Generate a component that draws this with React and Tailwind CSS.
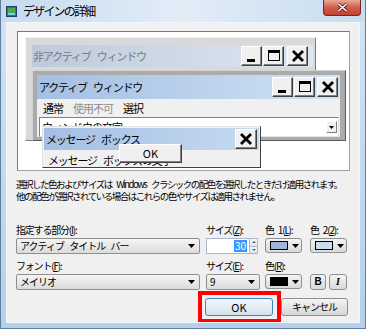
const jp = "font-['Noto_Sans_CJK_JP',sans-serif]";

function Tri() {
  return (
    <svg width="7" height="4" viewBox="0 0 7 4" className="shrink-0">
      <path d="M0 0h7L3.5 4z" fill="#000" />
    </svg>
  );
}

function CaptionBtn({ kind, className = '' }) {
  return (
    <div className={`w-[21px] h-[20px] bg-[#f0f0f0] border border-t-white border-l-white border-b-[#404040] border-r-[#404040] shadow-[inset_-1px_-1px_0_#808080] flex items-center justify-center ${className}`}>
      <svg width="14" height="14" viewBox="0 0 14 14">
        {kind === 'min' && <rect x="2" y="10" width="8" height="3" fill="#000" />}
        {kind === 'max' && (
          <>
            <rect x="1.5" y="1.5" width="11" height="10" fill="none" stroke="#000" />
            <rect x="1" y="1" width="12" height="3" fill="#000" />
          </>
        )}
        {kind === 'close' && <path d="M2 2l10 10M12 2L2 12" stroke="#000" strokeWidth="2.8" />}
      </svg>
    </div>
  );
}

function Combo({ children, className = '' }) {
  return (
    <div className={`h-[16px] rounded-[2px] border border-[#8e8f8f] bg-gradient-to-b from-[#f4f4f4] to-[#dcdcdc] flex items-center justify-between pl-[3px] pr-[4px] ${className}`}>
      <span className="text-[10px] leading-none tracking-[-1px] [word-spacing:4px] whitespace-nowrap">{children}</span>
      <Tri />
    </div>
  );
}

function ColorBtn({ swatch }) {
  return (
    <div className="w-[37px] h-[15px] rounded-[3px] border border-[#8e8f8f] bg-gradient-to-b from-[#f4f4f4] to-[#d9d9d9] flex items-center pl-[4px] gap-[4px]">
      <div className={`w-[18px] h-[9px] border border-black ${swatch}`} />
      <Tri />
    </div>
  );
}

function Label({ children }) {
  return <div className="h-[14px] text-[10px] leading-[12px] tracking-[-1.2px] [word-spacing:3px] whitespace-nowrap">{children}</div>;
}

export default function App() {
  return (
    <div className={`w-[366px] h-[329px] overflow-hidden ${jp} text-black bg-gradient-to-b from-[#d3e3f3] to-[#b6d0ea] border-x border-b border-[#607f9f] flex flex-col`}>
      {/* title bar */}
      <div className="h-[22px] shrink-0 flex items-start justify-between pl-[5px] pr-[4px] bg-gradient-to-r from-[#c6dbef] via-[#e2edf7] to-[#c8dcf0]">
        <div className="flex items-center gap-[6px] mt-[5px]">
          <svg width="11" height="11" viewBox="0 0 11 11">
            <rect x="0.5" y="0.5" width="10" height="10" fill="#2f6fb8" stroke="#1d3f6b" />
            <rect x="2" y="2" width="7" height="5" fill="#44b04a" />
            <rect x="2" y="7" width="7" height="2" fill="#7fc6ff" />
          </svg>
          <span className="text-[12px] leading-none tracking-[-1.8px]">デザインの詳細</span>
        </div>
        <div className="w-[38px] h-[16px] rounded-b-[4px] border border-t-0 border-[#6e2b25] bg-gradient-to-b from-[#e9a795] via-[#d25b4c] to-[#c1412f] flex items-center justify-center">
          <svg width="11" height="9" viewBox="0 0 11 9">
            <path d="M1.5 1l8 7M9.5 1l-8 7" stroke="#5a1d18" strokeWidth="3.2" />
            <path d="M1.5 1l8 7M9.5 1l-8 7" stroke="#fff" strokeWidth="1.6" />
          </svg>
        </div>
      </div>

      {/* client */}
      <div className="mx-[5px] h-[301px] shrink-0 border border-[#f2f7fc] bg-[#f0f0f0] flex flex-col overflow-hidden">
        {/* preview */}
        <div className="relative ml-[10px] mt-[8px] w-[333px] h-[140px] shrink-0 bg-white border border-[#a0a0a0] border-t-[#7a7a7a] border-l-[#7a7a7a] overflow-hidden">
          {/* inactive window */}
          <div className="absolute left-[7px] top-[5px] w-[291px] h-[104px] bg-[#d9d9d9] border border-t-[#f4f4f4] border-l-[#f4f4f4] border-b-[#7a7a7a] border-r-[#7a7a7a] pt-[7px] pl-[6px] pr-[2px]">
            <div className="h-[22px] bg-gradient-to-r from-[#bccadb] to-[#dfe8f1] flex items-center justify-between">
              <span className="pl-[1px] text-[11px] leading-none tracking-[-1.2px] [word-spacing:5px] text-[#7a7a7a] whitespace-nowrap">非アクティブ ウィンドウ</span>
              <div className="flex items-center mr-[5px]">
                <CaptionBtn kind="min" />
                <CaptionBtn kind="max" className="ml-[1px]" />
                <CaptionBtn kind="close" className="ml-[3px]" />
              </div>
            </div>
          </div>

          {/* active window */}
          <div className="absolute left-[14px] top-[38px] w-[314px] h-[71px] bg-[#ababab] border border-t-[#d4d4d4] border-l-[#d4d4d4] border-b-[#5a5a5a] border-r-[#5a5a5a] pt-[4px] pl-[4px] pr-[5px] overflow-hidden">
            <div className="h-[24px] bg-gradient-to-r from-[#a4bfe3] to-[#d0e2f5] flex items-center justify-between">
              <span className="pl-[2px] text-[11px] leading-none tracking-[-1.2px] [word-spacing:5px] whitespace-nowrap">アクティブ ウィンドウ</span>
              <div className="flex items-center mr-[2px]">
                <CaptionBtn kind="min" />
                <CaptionBtn kind="max" className="ml-[1px]" />
                <CaptionBtn kind="close" className="ml-[2px]" />
              </div>
            </div>
            <div className="bg-[#f0f0f0] pl-[2px] pr-[1px]">
              <div className="h-[18px] flex items-center pl-[4px] text-[11px] leading-none tracking-[-1px] whitespace-nowrap">
                <span className="w-[30px]">通常</span>
                <span className="w-[50px] text-[#8d8d8d]">使用不可</span>
                <span>選択</span>
              </div>
              <div className="h-[20px] bg-white border border-t-[#808080] border-l-[#808080] border-b-[#e4e4e4] border-r-[#e4e4e4] flex items-center justify-between pl-[2px] pr-[1px]">
                <span className="text-[11px] leading-none tracking-[-1px]">ウィンドウの文字</span>
                <div className="w-[11px] h-[12px] bg-[#f0f0f0] border border-t-white border-l-white border-b-[#808080] border-r-[#808080] flex items-center justify-center">
                  <svg width="5" height="3" viewBox="0 0 5 3"><path d="M0 0h5L2.5 3z" fill="#000" /></svg>
                </div>
              </div>
            </div>
          </div>

          {/* message box */}
          <div className="absolute left-[24px] top-[94px] w-[219px] h-[42px] bg-[#f0f0f0] border border-t-[#e3e3e3] border-l-[#e3e3e3] border-b-[#404040] border-r-[#404040] pt-[1px] px-[1px] overflow-hidden">
            <div className="h-[22px] bg-gradient-to-r from-[#a4bfe3] to-[#c6daf1] flex items-center justify-between">
              <span className="pl-[2px] text-[11px] leading-none tracking-[-1.2px] [word-spacing:5px] whitespace-nowrap">メッセージ ボックス</span>
              <CaptionBtn kind="close" className="mr-[2px] w-[22px]" />
            </div>
            <div className="pl-[4px] pt-[3px] text-[11px] leading-[14px] tracking-[-1.2px] [word-spacing:5px] whitespace-nowrap">メッセージ ボックスの文字</div>
          </div>

          {/* OK button in preview */}
          <div className="absolute left-[101px] top-[112px] w-[63px] h-[19px] bg-[#f0f0f0] border border-t-white border-l-white border-b-[#404040] border-r-[#404040] shadow-[inset_-1px_-1px_0_#808080] flex items-center justify-center text-[11px] leading-none">
            OK
          </div>
        </div>

        {/* description */}
        <div className="mt-[7px] ml-[9px] text-[9.5px] leading-[12px] tracking-[-1.5px] [word-spacing:4px] whitespace-nowrap">
          <div>選択した色およびサイズは Windows クラシックの配色を選択したときだけ適用されます。</div>
          <div>他の配色が選択されている場合はこれらの色やサイズは適用されません。</div>
        </div>

        {/* row 1 */}
        <div className="mt-[22px] pl-[9px] flex">
          <div className="w-[184px]">
            <Label>指定する部分(<u>I</u>):</Label>
            <Combo>アクティブ タイトル バー</Combo>
          </div>
          <div className="w-[54px] ml-[6px]">
            <Label>サイズ(<u>Z</u>):</Label>
            <div className="h-[16px] flex">
              <div className="w-[44px] h-[16px] bg-white border border-[#a9b7c6] flex items-center justify-end pr-[2px]">
                <span className="bg-[#3399ff] text-white text-[10px] leading-[12px] px-[1px]">30</span>
              </div>
              <div className="w-[8px] h-[16px] flex flex-col border border-l-0 border-[#a9b7c6]">
                <div className="flex-1 bg-gradient-to-b from-[#f4f7fb] to-[#dfe7f0] border-b border-[#a9b7c6] flex items-center justify-center">
                  <svg width="4" height="2" viewBox="0 0 4 2"><path d="M0 2h4L2 0z" fill="#4d6185" /></svg>
                </div>
                <div className="flex-1 bg-gradient-to-b from-[#f4f7fb] to-[#dfe7f0] flex items-center justify-center">
                  <svg width="4" height="2" viewBox="0 0 4 2"><path d="M0 0h4L2 2z" fill="#4d6185" /></svg>
                </div>
              </div>
            </div>
          </div>
          <div className="w-[38px] ml-[5px]">
            <Label>色 1(<u>L</u>):</Label>
            <ColorBtn swatch="bg-[#9fb6d8]" />
          </div>
          <div className="w-[38px] ml-[7px]">
            <Label>色 2(<u>2</u>):</Label>
            <ColorBtn swatch="bg-[#c9dcf2]" />
          </div>
        </div>

        {/* row 2 */}
        <div className="mt-[6px] pl-[9px] flex">
          <div className="w-[184px]">
            <Label>フォント(<u>F</u>):</Label>
            <Combo>メイリオ</Combo>
          </div>
          <div className="w-[54px] ml-[6px]">
            <Label>サイズ(<u>E</u>):</Label>
            <Combo>9</Combo>
          </div>
          <div className="w-[38px] ml-[5px]">
            <Label>色(<u>R</u>):</Label>
            <ColorBtn swatch="bg-black" />
          </div>
          <div className="ml-[7px] pt-[14px] flex gap-[3px]">
            <div className="w-[16px] h-[16px] rounded-[3px] border border-[#8e8f8f] bg-gradient-to-b from-[#f4f4f4] to-[#d9d9d9] flex items-center justify-center text-[10px] font-bold leading-none font-['Liberation_Sans',sans-serif]">B</div>
            <div className="w-[18px] h-[16px] rounded-[3px] border border-[#8e8f8f] bg-gradient-to-b from-[#f4f4f4] to-[#d9d9d9] flex items-center justify-center text-[10px] italic font-bold leading-none font-['Liberation_Serif',serif]">I</div>
          </div>
        </div>

        {/* buttons */}
        <div className="mt-[1px] pr-[11px] flex justify-end items-start">
          <div className="w-[83px] h-[32px] border-[4px] border-[#ff0000] pt-[3px] pl-[3px]">
            <div className="w-[68px] h-[18px] rounded-[3px] border border-[#3c86c8] bg-gradient-to-b from-[#f3f7fa] to-[#d5e2ec] flex items-center justify-center text-[11px] leading-none">OK</div>
          </div>
          <div className="w-[67px] h-[18px] mt-[7px] rounded-[3px] border border-[#8e8f8f] bg-gradient-to-b from-[#f4f4f4] to-[#d6d6d6] flex items-center justify-center text-[10px] leading-none tracking-[-1px]">キャンセル</div>
        </div>
      </div>
    </div>
  );
}
